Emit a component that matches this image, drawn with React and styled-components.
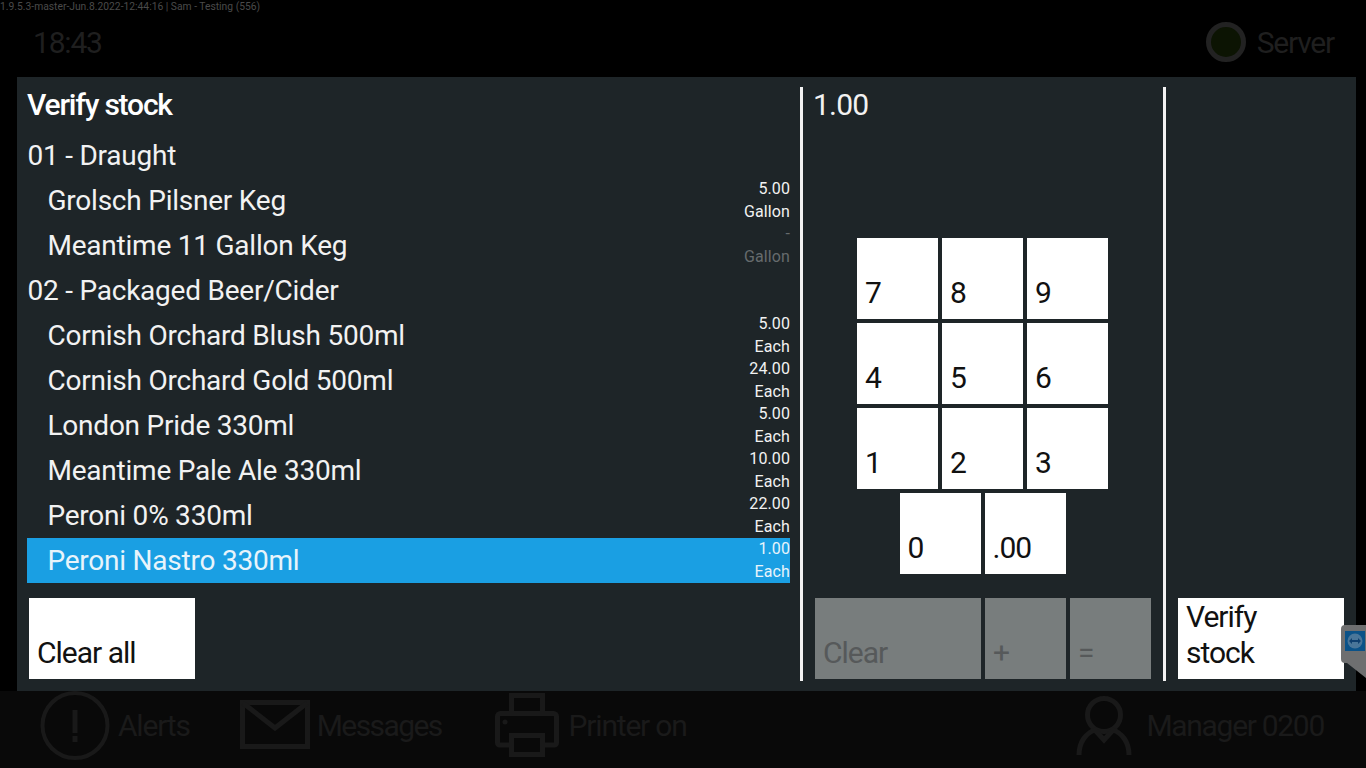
import styled, { createGlobalStyle } from 'styled-components';

const GlobalStyle = createGlobalStyle`
	html, body {
		margin: 0;
		padding: 0;
		background: #000;
	}
	body {
		font-family: Roboto, "Liberation Sans", sans-serif;
	}
`;

const stock = [
	{ group: '01 - Draught' },
	{ name: 'Grolsch Pilsner Keg', qty: '5.00', unit: 'Gallon' },
	{ name: 'Meantime 11 Gallon Keg', qty: '-', unit: 'Gallon', empty: true },
	{ group: '02 - Packaged Beer/Cider' },
	{ name: 'Cornish Orchard Blush 500ml', qty: '5.00', unit: 'Each' },
	{ name: 'Cornish Orchard Gold 500ml', qty: '24.00', unit: 'Each' },
	{ name: 'London Pride 330ml', qty: '5.00', unit: 'Each' },
	{ name: 'Meantime Pale Ale 330ml', qty: '10.00', unit: 'Each' },
	{ name: 'Peroni 0% 330ml', qty: '22.00', unit: 'Each' },
	{ name: 'Peroni Nastro 330ml', qty: '1.00', unit: 'Each', selected: true },
];

const Screen = styled.div`
	width: 1366px;
	height: 768px;
	overflow: hidden;
	position: relative;
	display: flex;
	flex-direction: column;
	background: #000;
`;

const Header = styled.header`
	height: 77px;
	box-sizing: border-box;
	display: flex;
	flex-direction: column;
`;

const Version = styled.div`
	height: 14px;
	font-size: 10.3px;
	line-height: 14px;
	color: #4a4a4a;
	white-space: nowrap;
`;

const HeaderRow = styled.div`
	display: flex;
	justify-content: space-between;
	align-items: center;
	height: 44px;
	padding: 6px 32px 0 33px;
	font-size: 30px;
	letter-spacing: -1.2px;
	color: #1f1f1f;
`;

const ServerStatus = styled.div`
	display: flex;
	align-items: center;
	gap: 11px;
`;

const Led = styled.span`
	width: 30px;
	height: 30px;
	border-radius: 50%;
	border: 5px solid #222;
	background: #0c1403;
`;

const Panel = styled.main`
	width: 1339px;
	height: 614px;
	margin-left: 17px;
	box-sizing: border-box;
	padding: 10px 12px 10px 10px;
	background: #1e2528;
	display: grid;
	grid-template-columns: 776px 363px 1fr;
`;

const ListColumn = styled.section`
	width: 763px;
	display: flex;
	flex-direction: column;
`;

const Title = styled.h1`
	margin: 0;
	height: 46px;
	font-size: 30px;
	line-height: 35px;
	font-weight: 500;
	letter-spacing: -1.2px;
	color: #fff;
`;

const Row = styled.div`
	height: 45px;
	display: flex;
	justify-content: space-between;
	align-items: center;
	padding-left: ${(p) => (p.$group ? '0.5px' : '20.5px')};
	background: ${(p) => (p.$selected ? '#1a9fe3' : 'transparent')};
	color: ${(p) => (p.$selected ? '#e8f4fb' : '#f2f2f2')};
	font-size: 28px;
	letter-spacing: -0.23px;
	white-space: nowrap;
`;

const Quantity = styled.div`
	font-size: 16px;
	line-height: 22.5px;
	letter-spacing: 0.1px;
	text-align: right;
	color: ${(p) => (p.$empty ? '#666b6d' : 'inherit')};
`;

const ListFooter = styled.div`
	margin-top: auto;
	padding-left: 2px;
	padding-bottom: 2px;
`;

const Button = styled.button`
	width: ${(p) => p.$width || 81}px;
	height: 81px;
	box-sizing: border-box;
	margin: 0;
	padding: 0 8px 8px;
	border: 0;
	border-radius: 0;
	display: flex;
	align-items: flex-end;
	text-align: left;
	font-family: inherit;
	font-size: 30px;
	line-height: 36px;
	letter-spacing: -1px;
	background: ${(p) => (p.disabled ? '#787d7d' : '#fff')};
	color: ${(p) => (p.disabled ? '#56595a' : '#111')};
`;

const PadColumn = styled.section`
	border-left: 3px solid #f2f2f2;
	border-right: 3px solid #f2f2f2;
	margin-left: -3px;
	display: flex;
	flex-direction: column;
`;

const Entry = styled.div`
	height: 151px;
	padding-left: 10px;
	font-size: 30px;
	line-height: 35px;
	letter-spacing: -0.8px;
	color: #f2f2f2;
`;

const KeyRow = styled.div`
	display: flex;
	justify-content: center;
	gap: 4px;
	margin-bottom: 4px;
	padding-right: 1px;
`;

const Actions = styled.div`
	margin-top: auto;
	display: flex;
	gap: 4px;
	padding: 0 0 2px 12px;
`;

const VerifyColumn = styled.section`
	display: flex;
	align-items: flex-end;
	padding: 0 0 2px 12px;
`;

const Footer = styled.footer`
	height: 77px;
	background: #090909;
	display: flex;
	align-items: center;
	justify-content: space-between;
	padding: 0 42px 9px 40px;
	box-sizing: border-box;
	font-size: 30px;
	color: #1a1a1a;
`;

const FooterGroup = styled.div`
	display: flex;
	align-items: center;
	gap: 50px;
`;

const FooterItem = styled.div`
	display: flex;
	align-items: center;
	gap: ${(p) => p.$gap || 7}px;
	letter-spacing: ${(p) => p.$tracking || -1.2}px;
`;

const RemoteTab = styled.div`
	position: absolute;
	left: 1341px;
	top: 625px;
`;

const AlertIcon = () => (
	<svg width="70" height="70" viewBox="0 0 70 70" fill="none" stroke="#191919" strokeWidth="4">
		<circle cx="35" cy="35.5" r="32.5" />
		<path d="M35 20v23M35 46v6" strokeWidth="5" />
	</svg>
);

const MailIcon = () => (
	<svg width="70" height="50" viewBox="0 0 70 50" fill="none" stroke="#191919" strokeWidth="5">
		<rect x="2.5" y="2.5" width="65" height="44" />
		<path d="M3 3l32 25L67 3" />
	</svg>
);

const PrinterIcon = () => (
	<svg width="70" height="66" viewBox="0 0 70 66" fill="none" stroke="#191919" strokeWidth="5">
		<path d="M19.5 21V3.5h31V21" />
		<path d="M19.5 53H7.5a2 2 0 0 1-2-2V24.5a3 3 0 0 1 3-3h53a3 3 0 0 1 3 3V51a2 2 0 0 1-2 2H50.5" />
		<rect x="19.5" y="43.5" width="31" height="19" />
		<circle cx="13" cy="30" r="2.5" fill="#191919" stroke="none" />
	</svg>
);

const UserIcon = () => (
	<svg width="56" height="62" viewBox="0 0 56 62" fill="none" stroke="#191919" strokeWidth="5">
		<circle cx="28" cy="21" r="16.5" />
		<path d="M3 61c0-13 7-22 16-25l9 10 9-10c9 3 16 12 16 25" />
	</svg>
);

const TeamViewerTab = () => (
	<svg width="25" height="54" viewBox="0 0 25 54" style={{ display: 'block' }}>
		<path d="M4 0h21v53L6 38H4a4 4 0 0 1-4-4V4a4 4 0 0 1 4-4z" fill="#6e6f70" />
		<rect x="4" y="6" width="20" height="20" fill="#0b5288" />
		<circle cx="14" cy="16" r="7.5" fill="#4a7699" />
		<path d="M8 16l3-3v2h6v-2l3 3-3 3v-2h-6v2z" fill="#10406f" />
	</svg>
);

const keyRows = [
	['7', '8', '9'],
	['4', '5', '6'],
	['1', '2', '3'],
	['0', '.00'],
];

export default function App() {
	return (
		<Screen>
			<GlobalStyle />
			<Header>
				<Version>1.9.5.3-master-Jun.8.2022-12:44:16 | Sam - Testing (556)</Version>
				<HeaderRow>
					<span>18:43</span>
					<ServerStatus>
						<Led />
						<span>Server</span>
					</ServerStatus>
				</HeaderRow>
			</Header>
			<Panel>
				<ListColumn>
					<Title>Verify stock</Title>
					{stock.map((item) =>
						item.group ? (
							<Row $group key={item.group}>
								{item.group}
							</Row>
						) : (
							<Row $selected={item.selected} key={item.name}>
								{item.name}
								<Quantity $empty={item.empty}>
									{item.qty}
									<br />
									{item.unit}
								</Quantity>
							</Row>
						)
					)}
					<ListFooter>
						<Button $width={166}>Clear all</Button>
					</ListFooter>
				</ListColumn>
				<PadColumn>
					<Entry>1.00</Entry>
					{keyRows.map((keys) => (
						<KeyRow key={keys[0]}>
							{keys.map((k) => (
								<Button key={k}>{k}</Button>
							))}
						</KeyRow>
					))}
					<Actions>
						<Button disabled $width={166}>
							Clear
						</Button>
						<Button disabled>+</Button>
						<Button disabled>=</Button>
					</Actions>
				</PadColumn>
				<VerifyColumn>
					<Button $width={166}>
						<span>
							Verify
							<br />
							stock
						</span>
					</Button>
				</VerifyColumn>
			</Panel>
			<Footer>
				<FooterGroup>
					<FooterItem $gap={8}>
						<AlertIcon />
						Alerts
					</FooterItem>
					<FooterItem $tracking={-1.6}>
						<MailIcon />
						Messages
					</FooterItem>
					<FooterItem>
						<PrinterIcon />
						Printer on
					</FooterItem>
				</FooterGroup>
				<FooterItem $gap={14} $tracking={-1.3}>
					<UserIcon />
					Manager 0200
				</FooterItem>
			</Footer>
			<RemoteTab>
				<TeamViewerTab />
			</RemoteTab>
		</Screen>
	);
}
